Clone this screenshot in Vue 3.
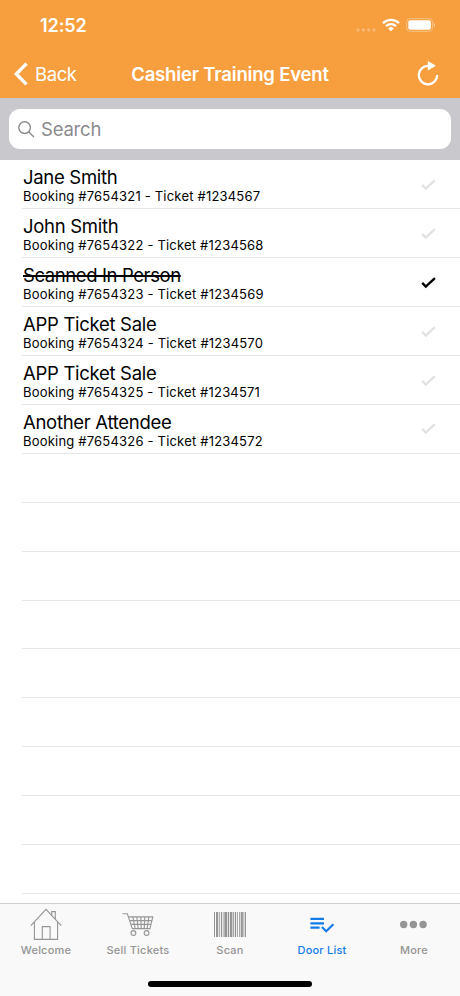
<script setup>
import { ref, computed } from 'vue'

const attendees = ref([
  { name: 'Jane Smith', booking: 7654321, ticket: 1234567, scanned: false },
  { name: 'John Smith', booking: 7654322, ticket: 1234568, scanned: false },
  { name: 'Scanned In Person', booking: 7654323, ticket: 1234569, scanned: true },
  { name: 'APP Ticket Sale', booking: 7654324, ticket: 1234570, scanned: false },
  { name: 'APP Ticket Sale', booking: 7654325, ticket: 1234571, scanned: false },
  { name: 'Another Attendee', booking: 7654326, ticket: 1234572, scanned: false },
])

const search = ref('')

const filtered = computed(() =>
  attendees.value.filter((a) => a.name.toLowerCase().includes(search.value.toLowerCase()))
)

// blank rows keep the separators going down to the tab bar
const blankRows = computed(() => 15 - filtered.value.length)

// x, width pairs
const bars = [
  [0, 1], [2, 2.2], [5.3, 0.8], [7, 1], [8.8, 0.7], [10.3, 3], [14, 1], [15.8, 2.6],
  [19.2, 0.8], [20.8, 1.3], [23.2, 0.8], [25, 0.8], [26.7, 2.2], [29.5, 0.8], [31, 1],
]
</script>

<template>
  <div class="screen">
    <header class="header">
      <div class="status">
        <span class="time">12:52</span>
        <div class="status-icons">
          <svg class="signal" width="20" height="4" viewBox="0 0 20 4">
            <circle cx="2" cy="2" r="1.7" />
            <circle cx="7.4" cy="2" r="1.7" />
            <circle cx="12.8" cy="2" r="1.7" />
            <circle cx="18" cy="2" r="1.7" />
          </svg>
          <svg class="wifi" width="18" height="14" viewBox="0 0 18 14">
            <path d="M1 5.1a11.4 11.4 0 0 1 16 0" />
            <path d="M4 8.2a7.2 7.2 0 0 1 10 0" />
            <path class="wifi-dot" d="M6.2 10.4a4 4 0 0 1 5.6 0L9 13.3z" />
          </svg>
          <svg class="battery" width="30" height="14" viewBox="0 0 30 14">
            <rect class="battery-case" x=".6" y=".6" width="26" height="12.8" rx="3.6" />
            <rect x="2.3" y="2.3" width="22.6" height="9.4" rx="2" />
            <path class="battery-tip" d="M27.8 4.8v4.4c1.7-.8 1.7-3.6 0-4.4z" />
          </svg>
        </div>
      </div>
      <nav class="nav">
        <button class="back" type="button">
          <svg width="14" height="24" viewBox="0 0 14 24">
            <path d="M12.5 1.6L2.3 12l10.2 10.4" />
          </svg>
          <span>Back</span>
        </button>
        <h1>Cashier Training Event</h1>
        <button class="refresh" type="button">
          <svg width="22" height="25" viewBox="0 0 22 25">
            <path class="arc" d="M12 4.9h-1a9.2 9.2 0 1 0 9.2 9.2" />
            <path class="head" d="M10.8 0v9.4l8.2-4.7z" />
          </svg>
        </button>
      </nav>
    </header>

    <div class="search">
      <label class="field">
        <svg width="17" height="17" viewBox="0 0 17 17">
          <circle cx="6.6" cy="6.6" r="5.8" />
          <path d="M10.9 10.9l5 5" />
        </svg>
        <input v-model="search" type="text" placeholder="Search" />
      </label>
    </div>

    <ul class="list">
      <li v-for="a in filtered" :key="a.ticket" :class="{ scanned: a.scanned }">
        <div class="info">
          <p class="name"><span>{{ a.name }}</span></p>
          <p class="detail">Booking #{{ a.booking }} - Ticket #{{ a.ticket }}</p>
        </div>
        <svg class="check" width="15" height="12" viewBox="0 0 15 12">
          <path d="M1.2 5.9l3.6 3.7L13.9 1.2" />
        </svg>
      </li>
      <li v-for="n in blankRows" :key="'blank' + n"></li>
    </ul>

    <footer class="tabs">
      <a class="tab">
        <svg width="32" height="33" viewBox="0 0 32 33">
          <path d="M.8 17.6L16 1.3l15.2 16.3M4.4 14.2v17.2h23.2V14.2M21.7 7.2V3.6h3.6v7.6M12.3 31.2V18.6h7.8v12.6" />
        </svg>
        <span>Welcome</span>
      </a>
      <a class="tab">
        <svg width="32" height="33" viewBox="0 0 32 33">
          <path d="M.5 5.7h4.8l5 14.9h18.2M6.4 8.9h24.4l-2.8 11.4M7.6 12.6h22.2M8.9 16.4h20M10.8 9l2.4 11.5M14.8 9l1.4 11.5M18.8 9l.4 11.5M22.8 9l-.6 11.5M26.8 9l-1.6 11.5" />
          <circle cx="11.4" cy="25" r="2.4" />
          <circle cx="24.6" cy="25" r="2.4" />
        </svg>
        <span>Sell Tickets</span>
      </a>
      <a class="tab">
        <svg class="solid" width="32" height="33" viewBox="0 0 32 33">
          <rect v-for="b in bars" :key="b[0]" :x="b[0]" y="4" :width="b[1]" height="25" />
        </svg>
        <span>Scan</span>
      </a>
      <a class="tab active">
        <svg width="32" height="33" viewBox="0 0 32 33">
          <path d="M4.4 10.9h13.6M4.4 15.3h13.6M4.4 19.7h9.2M15.9 19l4.3 4.2 7.2-7" />
        </svg>
        <span>Door List</span>
      </a>
      <a class="tab">
        <svg class="solid" width="32" height="33" viewBox="0 0 32 33">
          <circle cx="5.7" cy="16.5" r="3.7" />
          <circle cx="15.4" cy="16.5" r="3.7" />
          <circle cx="25.1" cy="16.5" r="3.7" />
        </svg>
        <span>More</span>
      </a>
      <div class="home-bar"></div>
    </footer>
  </div>
</template>

<style>
body {
  margin: 0;
}
</style>

<style scoped>
.screen {
  display: flex;
  flex-direction: column;
  width: 460px;
  height: 996px;
  overflow: hidden;
  background: #fff;
  color: #000;
  font-family: Inter, "Liberation Sans", sans-serif;
}

button {
  padding: 0;
  border: 0;
  background: none;
  color: inherit;
  font: inherit;
}

svg {
  display: block;
  flex: none;
}

.header {
  flex: none;
  height: 98.4px;
  background: #f79f3f;
  color: #fff;
}

.status {
  display: flex;
  justify-content: space-between;
  height: 49px;
  padding: 0 24px 0 40px;
}

.time {
  padding-top: 15px;
  font-size: 18px;
  font-weight: 600;
  line-height: 22px;
  letter-spacing: -0.1px;
}

.status-icons {
  display: flex;
  align-items: flex-start;
  padding-top: 18px;
  fill: #fff;
}

.signal {
  margin: 10px 6px 0 0;
  opacity: 0.25;
}

.wifi {
  margin-right: 6px;
  fill: none;
  stroke: #fff;
  stroke-width: 2.3;
}

.wifi-dot {
  fill: #fff;
  stroke: none;
}

.battery-case {
  fill: none;
  stroke: #fff;
  stroke-opacity: 0.35;
}

.battery-tip {
  fill-opacity: 0.5;
}

.nav {
  display: grid;
  grid-template-columns: 90px 1fr 90px;
  align-items: center;
  height: 49px;
}

.back {
  display: flex;
  align-items: center;
  gap: 7px;
  padding-left: 14px;
  font-size: 18.5px;
  letter-spacing: -0.4px;
}

.back svg {
  fill: none;
  stroke: #fff;
  stroke-width: 3.4;
}

h1 {
  margin: 0;
  text-align: center;
  white-space: nowrap;
  font-size: 18.5px;
  font-weight: 600;
  letter-spacing: -0.18px;
}

.refresh {
  justify-self: end;
  margin-right: 21px;
}

.arc {
  fill: none;
  stroke: #fff;
  stroke-width: 2.3;
}

.head {
  fill: #fff;
}

.search {
  flex: none;
  box-sizing: border-box;
  height: 62px;
  padding: 11px 9px;
  background: #c8c8cd;
}

.field {
  display: flex;
  align-items: center;
  height: 40px;
  padding: 0 9px;
  border-radius: 11px;
  background: #fff;
}

.field svg {
  fill: none;
  stroke: #8a8a8e;
  stroke-width: 1.4;
}

.field input {
  flex: 1;
  margin-left: 6px;
  padding: 0;
  border: 0;
  outline: 0;
  background: none;
  font: 18.5px Inter, sans-serif;
  letter-spacing: -0.2px;
}

.field input::placeholder {
  color: #8a8a8e;
}

.list {
  flex: 1;
  min-height: 0;
  margin: 0;
  padding: 0 0 0 22px;
  overflow: hidden;
  list-style: none;
}

.list li {
  display: flex;
  justify-content: space-between;
  box-sizing: border-box;
  height: 48.92px;
  padding-right: 24px;
  border-bottom: 1px solid #e6e6e8;
}

.info {
  padding: 7px 0 0 1px;
}

.info p {
  margin: 0;
  white-space: nowrap;
}

.name {
  font-size: 18.5px;
  line-height: 21px;
  letter-spacing: -0.3px;
}

.detail {
  font-size: 13px;
  line-height: 16px;
  letter-spacing: 0.2px;
}

.scanned .name {
  letter-spacing: -0.4px;
}

.scanned .name span {
  text-decoration: line-through;
  text-decoration-thickness: 2px;
}

.check {
  margin-top: 18.5px;
  fill: none;
  stroke: #e2e2e2;
  stroke-width: 2.4;
}

.scanned .check {
  stroke: #000;
}

.tabs {
  position: relative;
  display: grid;
  grid-template-columns: repeat(5, 1fr);
  flex: none;
  box-sizing: border-box;
  height: 93px;
  padding-top: 4px;
  border-top: 1px solid #cfcfd1;
  background: #f9f9f9;
}

.tab {
  display: flex;
  flex-direction: column;
  align-items: center;
  color: #959595;
  font-size: 11px;
  font-weight: 500;
  line-height: 14px;
  letter-spacing: 0.22px;
}

.tab svg {
  margin-bottom: 2px;
  fill: none;
  stroke: currentColor;
  stroke-width: 1.1;
}

.tab svg.solid {
  fill: currentColor;
  stroke: none;
}

.tab.active {
  color: #147be8;
}

.tab.active svg {
  stroke-width: 2.2;
}

.home-bar {
  position: absolute;
  bottom: 9px;
  left: 148px;
  width: 164px;
  height: 6px;
  border-radius: 3px;
  background: #000;
}
</style>
